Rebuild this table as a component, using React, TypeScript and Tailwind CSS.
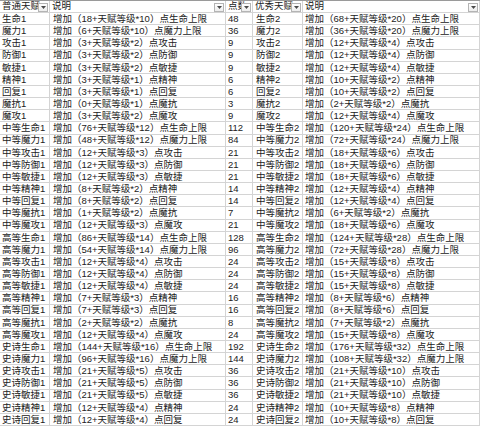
type Row = [string, string, number, string, string]

const rows: Row[] = [
  ['生命1', '增加（18+天赋等级*10）点生命上限', 48, '生命2', '增加（68+天赋等级*20）点生命上限'],
  ['魔力1', '增加（6+天赋等级*10）点魔力上限', 36, '魔力2', '增加（36+天赋等级*20）点魔力上限'],
  ['攻击1', '增加（3+天赋等级*2）点攻击', 9, '攻击2', '增加（12+天赋等级*4）点攻击'],
  ['防御1', '增加（3+天赋等级*2）点防御', 9, '防御2', '增加（12+天赋等级*4）点防御'],
  ['敏捷1', '增加（3+天赋等级*2）点敏捷', 9, '敏捷2', '增加（12+天赋等级*4）点敏捷'],
  ['精神1', '增加（3+天赋等级*1）点精神', 6, '精神2', '增加（10+天赋等级*2）点精神'],
  ['回复1', '增加（3+天赋等级*1）点回复', 6, '回复2', '增加（10+天赋等级*2）点回复'],
  ['魔抗1', '增加（0+天赋等级*1）点魔抗', 3, '魔抗2', '增加（2+天赋等级*2）点魔抗'],
  ['魔攻1', '增加（3+天赋等级*2）点魔攻', 9, '魔攻2', '增加（12+天赋等级*4）点魔攻'],
  ['中等生命1', '增加（76+天赋等级*12）点生命上限', 112, '中等生命2', '增加（120+天赋等级*24）点生命上限'],
  ['中等魔力1', '增加（48+天赋等级*12）点魔力上限', 84, '中等魔力2', '增加（72+天赋等级*24）点魔力上限'],
  ['中等攻击1', '增加（12+天赋等级*3）点攻击', 21, '中等攻击2', '增加（18+天赋等级*6）点攻击'],
  ['中等防御1', '增加（12+天赋等级*3）点防御', 21, '中等防御2', '增加（18+天赋等级*6）点防御'],
  ['中等敏捷1', '增加（12+天赋等级*3）点敏捷', 21, '中等敏捷2', '增加（18+天赋等级*6）点敏捷'],
  ['中等精神1', '增加（8+天赋等级*2）点精神', 14, '中等精神2', '增加（12+天赋等级*4）点精神'],
  ['中等回复1', '增加（8+天赋等级*2）点回复', 14, '中等回复2', '增加（12+天赋等级*4）点回复'],
  ['中等魔抗1', '增加（1+天赋等级*2）点魔抗', 7, '中等魔抗2', '增加（6+天赋等级*2）点魔抗'],
  ['中等魔攻1', '增加（12+天赋等级*3）点魔攻', 21, '中等魔攻2', '增加（18+天赋等级*6）点魔攻'],
  ['高等生命1', '增加（86+天赋等级*14）点生命上限', 128, '高等生命2', '增加（124+天赋等级*28）点生命上限'],
  ['高等魔力1', '增加（54+天赋等级*14）点魔力上限', 96, '高等魔力2', '增加（72+天赋等级*28）点魔力上限'],
  ['高等攻击1', '增加（12+天赋等级*4）点攻击', 24, '高等攻击2', '增加（15+天赋等级*8）点攻击'],
  ['高等防御1', '增加（12+天赋等级*4）点防御', 24, '高等防御2', '增加（15+天赋等级*8）点防御'],
  ['高等敏捷1', '增加（12+天赋等级*4）点敏捷', 24, '高等敏捷2', '增加（15+天赋等级*8）点敏捷'],
  ['高等精神1', '增加（7+天赋等级*3）点精神', 16, '高等精神2', '增加（8+天赋等级*6）点精神'],
  ['高等回复1', '增加（7+天赋等级*3）点回复', 16, '高等回复2', '增加（8+天赋等级*6）点回复'],
  ['高等魔抗1', '增加（2+天赋等级*2）点魔抗', 8, '高等魔抗2', '增加（7+天赋等级*2）点魔抗'],
  ['高等魔攻1', '增加（12+天赋等级*4）点魔攻', 24, '高等魔攻2', '增加（15+天赋等级*8）点魔攻'],
  ['史诗生命1', '增加（144+天赋等级*16）点生命上限', 192, '史诗生命2', '增加（176+天赋等级*32）点生命上限'],
  ['史诗魔力1', '增加（96+天赋等级*16）点魔力上限', 144, '史诗魔力2', '增加（108+天赋等级*32）点魔力上限'],
  ['史诗攻击1', '增加（21+天赋等级*5）点攻击', 36, '史诗攻击2', '增加（21+天赋等级*10）点攻击'],
  ['史诗防御1', '增加（21+天赋等级*5）点防御', 36, '史诗防御2', '增加（21+天赋等级*10）点防御'],
  ['史诗敏捷1', '增加（21+天赋等级*5）点敏捷', 36, '史诗敏捷2', '增加（21+天赋等级*10）点敏捷'],
  ['史诗精神1', '增加（12+天赋等级*4）点精神', 24, '史诗精神2', '增加（10+天赋等级*8）点精神'],
  ['史诗回复1', '增加（12+天赋等级*4）点回复', 24, '史诗回复2', '增加（10+天赋等级*8）点回复'],
]

const headers = ['普通天赋', '说明', '点数', '优秀天赋', '说明']

const cell =
  'flex items-center overflow-hidden whitespace-nowrap border-r border-b border-[#d4d4d4] leading-none'

function FilterButton() {
  return (
    <span className="absolute right-[1px] top-[2px] flex h-[9px] w-[10px] items-center justify-center border border-[#b4b4b4] bg-gradient-to-b from-white to-[#ededed]">
      <svg width="5" height="3" viewBox="0 0 5 3">
        <polygon points="0,0 5,0 2.5,3" fill="#4a4a4a" />
      </svg>
    </span>
  )
}

export default function App() {
  return (
    <div
      className="grid h-[426px] w-[480px] grid-cols-[50px_176px_27px_50px_177px] grid-rows-[repeat(35,minmax(0,1fr))] border-t border-[#9a9a9a] bg-white text-[9.5px] text-[#222]"
      style={{ fontFamily: '"Liberation Sans", "Noto Sans CJK SC", sans-serif' }}
    >
      {headers.map((h, i) => (
        <div key={'h' + i} className={cell + ' relative pl-[2px] pb-[2px]'}>
          {h}
          <FilterButton />
        </div>
      ))}
      {rows.map((r, i) => (
        <div key={i} className="contents">
          <div className={cell + ' pl-[2px]'}>{r[0]}</div>
          <div className={cell + ' pl-[3px]'}>{r[1]}</div>
          <div className={cell + ' pl-[2px]'}>{r[2]}</div>
          <div className={cell + ' pl-[3px]'}>{r[3]}</div>
          <div className={cell + ' pl-[2px]'}>{r[4]}</div>
        </div>
      ))}
    </div>
  )
}
